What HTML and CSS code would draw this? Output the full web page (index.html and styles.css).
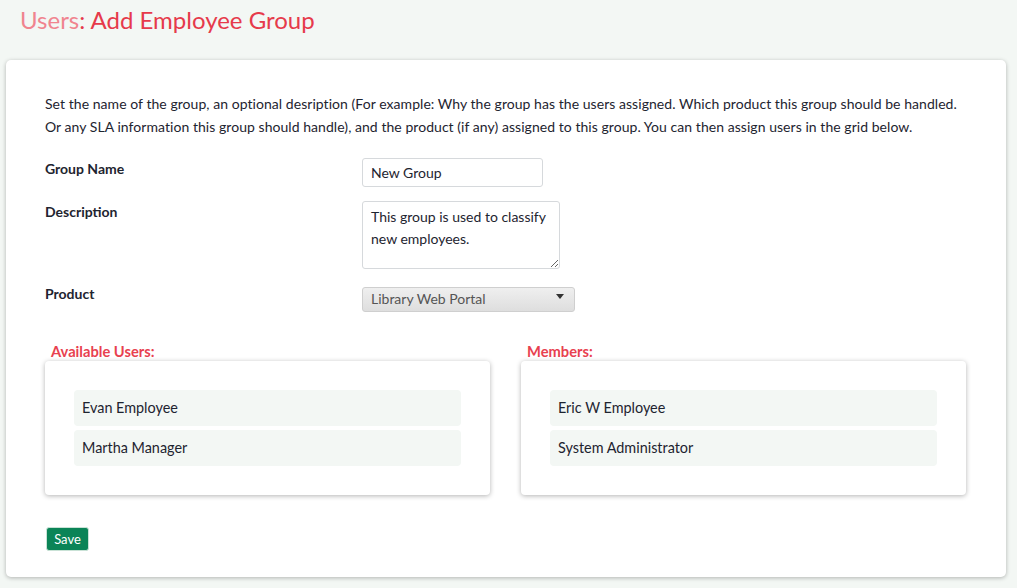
FILE: index.html
```html
<!DOCTYPE html>
<html>
<head>
<meta charset="utf-8">
<link rel="stylesheet" href="styles.css">
</head>
<body>
<header class="page-head">
  <h1 class="title"><span class="crumb">Users</span>: Add Employee Group</h1>
</header>
<main class="card">
  <p class="intro">Set the name of the group, an optional desription (For example: Why the group has the users assigned. Which product this group should be handled. Or any SLA information this group should handle), and the product (if any) assigned to this group. You can then assign users in the grid below.</p>
  <div class="form">
    <div class="row">
      <label class="label">Group Name</label>
      <input class="input" type="text" value="New Group">
    </div>
    <div class="row">
      <label class="label">Description</label>
      <textarea class="textarea">This group is used to classify new employees.</textarea>
    </div>
    <div class="row">
      <label class="label">Product</label>
      <div class="select"><span class="select-text">Library Web Portal</span><span class="caret"></span></div>
    </div>
  </div>
  <div class="lists">
    <section class="col">
      <h2 class="list-title">Available Users:</h2>
      <div class="list-box">
        <div class="item">Evan Employee</div>
        <div class="item">Martha Manager</div>
      </div>
    </section>
    <section class="col">
      <h2 class="list-title">Members:</h2>
      <div class="list-box">
        <div class="item">Eric W Employee</div>
        <div class="item">System Administrator</div>
      </div>
    </section>
  </div>
  <button class="save">Save</button>
</main>
</body>
</html>
```
FILE: styles.css
```css
* { box-sizing: border-box; }
html, body { margin: 0; padding: 0; }
body {
  background: #f3f7f4;
  font-family: Lato, "Open Sans", sans-serif;
  color: #1e2430;
  font-size: 14px;
  width: 1017px;
  height: 588px;
  overflow: hidden;
}
.page-head { padding: 4px 0 0 20px; height: 60px; }
.title {
  margin: 0;
  font-weight: 400;
  font-size: 24px;
  line-height: 32px;
  color: #e63a4b;
}
.crumb { color: #f0848f; }
.card {
  margin-left: 6px;
  width: 1000px;
  background: #fff;
  border-radius: 5px;
  box-shadow: 0 1px 4px rgba(0,0,0,0.28);
  padding: 32px 39px 26px 39px;
}
.intro { margin: 0 0 20px 0; line-height: 23px; letter-spacing: 0.05px; }
.form { display: flex; flex-direction: column; gap: 14px; }
.row { display: flex; align-items: flex-start; }
.label {
  width: 317px;
  flex: none;
  font-weight: 700;
  line-height: 22px;
}
.input {
  width: 181px;
  height: 29px;
  border: 1px solid #d6d9dc;
  border-radius: 3px;
  padding: 0 8px;
  font: inherit;
  color: #1e2430;
}
.textarea {
  width: 198px;
  height: 68px;
  border: 1px solid #d6d9dc;
  border-radius: 3px;
  padding: 4px 8px;
  font: inherit;
  line-height: 22px;
  color: #1e2430;
  resize: vertical;
}
.select {
  margin-top: 4px;
  width: 213px;
  height: 25px;
  border: 1px solid #cfcfcf;
  border-radius: 3px;
  background: linear-gradient(#efefef, #dedede);
  display: flex;
  align-items: center;
  justify-content: space-between;
  padding: 0 10px 2px 8px;
  color: #555;
}
.select-text { line-height: 20px; }
.caret {
  width: 0; height: 0;
  border-left: 4.5px solid transparent;
  border-right: 4.5px solid transparent;
  border-top: 5px solid #333;
  margin-top: -5px;
}
.lists {
  display: flex;
  gap: 31px;
  margin-top: 30px;
}
.col { width: 445px; }
.list-title {
  margin: 0 0 1px 6px;
  font-size: 14.7px;
  font-weight: 700;
  line-height: 18px;
  color: #e8414f;
}
.list-box {
  background: #fff;
  border-radius: 4px;
  box-shadow: 0 1px 5px rgba(0,0,0,0.3);
  padding: 29px;
  display: flex;
  flex-direction: column;
  gap: 4px;
}
.item {
  background: #f3f7f4;
  border-radius: 4px;
  height: 36px;
  line-height: 36px;
  padding-left: 8px;
  font-size: 14.4px;
}
.save {
  margin-top: 32px;
  margin-left: 1px;
  height: 24px;
  width: 43px;
  padding: 0;
  background: #0b8457;
  color: #fff;
  border: 1px solid #c9e2d6;
  border-radius: 3px;
  font-family: Lato, sans-serif;
  font-size: 13px;
  display: block;
}
```
